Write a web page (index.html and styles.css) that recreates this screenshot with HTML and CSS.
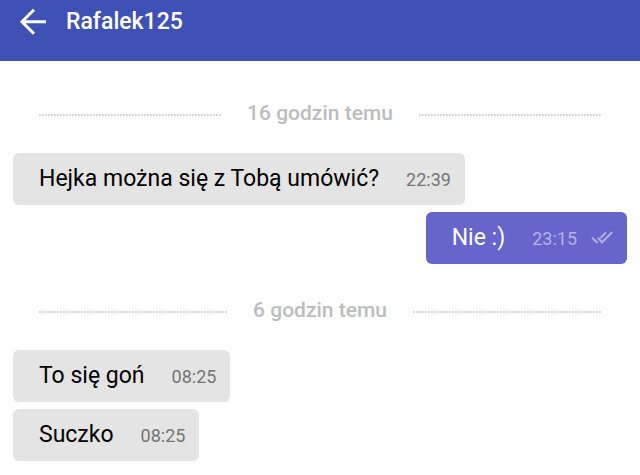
FILE: index.html
```html
<!DOCTYPE html>
<html lang="pl">
<head>
<meta charset="utf-8">
<meta name="viewport" content="width=device-width, initial-scale=1">
<title>Rafalek125</title>
<link rel="stylesheet" href="styles.css">
</head>
<body>
<header class="topbar">
  <button class="back" type="button" aria-label="Wstecz">
    <svg class="back-icon" viewBox="0 0 28 28" aria-hidden="true"><path d="M15 2.8 3 14.8l12 12M3 14.8H27"/></svg>
  </button>
  <h1 class="name">Rafalek125</h1>
</header>
<main class="chat">
  <div class="divider"><span class="ago">16 godzin temu</span></div>
  <div class="messages">
    <article class="bubble"><p class="text">Hejka można się z Tobą umówić?</p><time class="time">22:39</time></article>
    <article class="bubble sent">
      <p class="text">Nie :)</p><time class="time">23:15</time>
      <svg class="read" viewBox="0 0 22 14" aria-hidden="true"><path d="M1 6.6 6.6 12M7 6.6 11 11.4 21 1.2M9.6 6.8 15 1.4"/></svg>
    </article>
  </div>
  <div class="divider"><span class="ago">6 godzin temu</span></div>
  <div class="messages">
    <article class="bubble"><p class="text">To się goń</p><time class="time">08:25</time></article>
    <article class="bubble"><p class="text">Suczko</p><time class="time">08:25</time></article>
  </div>
</main>
</body>
</html>
```
FILE: styles.css
```css
* {
  box-sizing: border-box;
}

body {
  margin: 0;
  background: #fff;
  color: #000;
  font-family: Roboto, sans-serif;
}

.topbar {
  display: flex;
  align-items: center;
  gap: 19px;
  padding: 7px 19px 26px;
  background: #3f51b5;
  color: #fff;
}

.back {
  display: flex;
  padding: 0;
  border: 0;
  background: none;
  color: inherit;
}

.back-icon {
  width: 28px;
  height: 28px;
  fill: none;
  stroke: currentColor;
  stroke-width: 3;
}

.name {
  margin: 0;
  padding-top: 2px;
  font-size: 23px;
  font-weight: 500;
  line-height: 26px;
}

.chat {
  padding: 6px 13px 13px;
}

.divider {
  display: flex;
  align-items: center;
  gap: 26px;
  margin: 33px 26px 27px;
}

.divider::before,
.divider::after {
  content: "";
  flex: 1;
  height: 2px;
  margin-top: 3px;
  background: repeating-linear-gradient(to right, #d0d0d0 0 1px, #e0e0e0 1px 2px, #fafafa 2px 3px);
}

.ago {
  color: #bdbdbd;
  font-size: 21px;
  font-weight: 500;
  line-height: 26px;
}

.messages {
  display: flex;
  flex-direction: column;
  align-items: flex-start;
  gap: 7px;
}

.bubble {
  display: flex;
  align-items: baseline;
  padding: 10px 14px 10px 26px;
  border-radius: 6px;
  background: #e4e4e4;
}

.text {
  margin: 0 27px 0 0;
  font-size: 23px;
  line-height: 32px;
}

.time {
  color: #757575;
  font-size: 18px;
  line-height: 24px;
}

.sent {
  align-self: flex-end;
  background: #6565cb;
  color: #fff;
}

.sent .time {
  color: #b2b2e5;
}

.read {
  width: 22px;
  height: 14px;
  margin-left: 14px;
  margin-bottom: -1px;
  fill: none;
  stroke: #b2b2e5;
  stroke-width: 2;
}
```
